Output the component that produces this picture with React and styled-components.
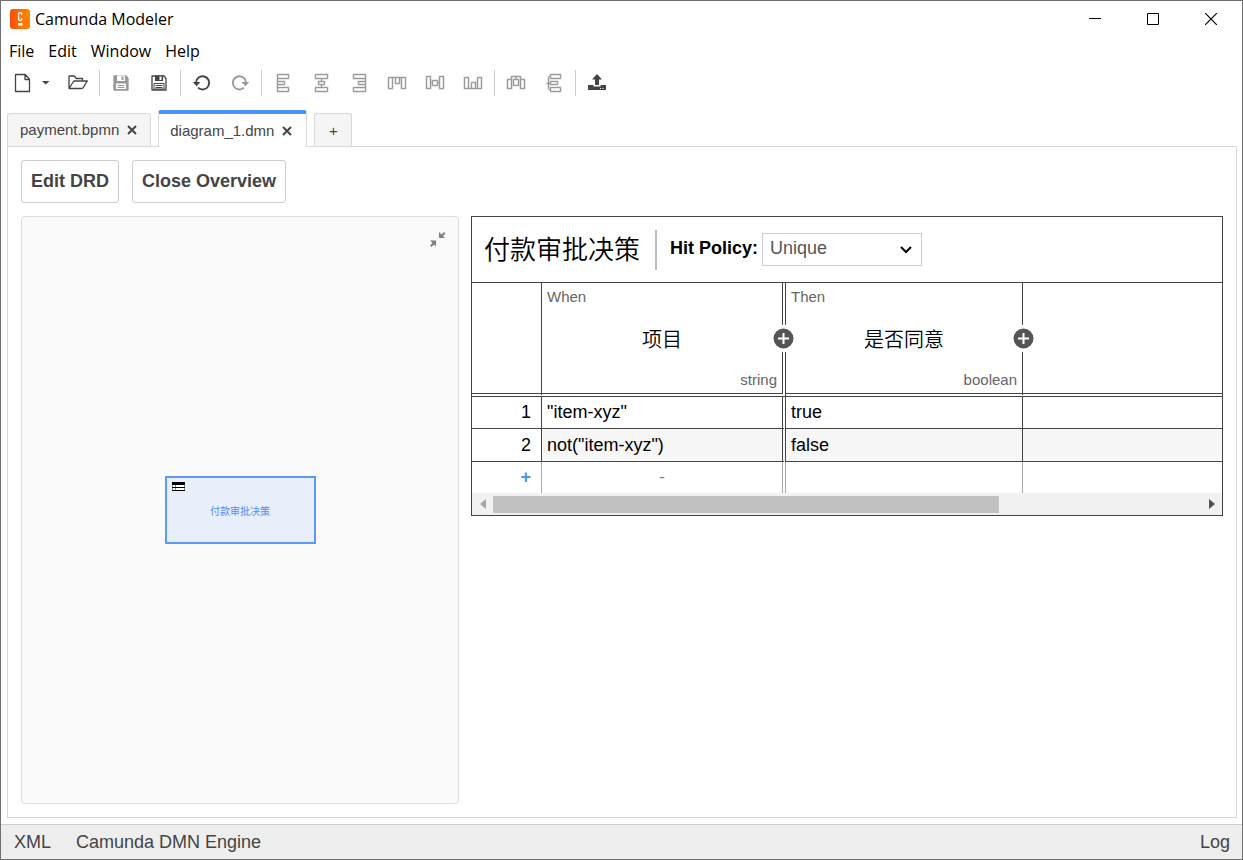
import React, { useState } from "react";
import styled, { createGlobalStyle } from "styled-components";

const GlobalStyle = createGlobalStyle`
  * {
    box-sizing: border-box;
  }

  body {
    margin: 0;
    background: #fff;
    color: #444;
    font-family: "Liberation Sans", "Noto Sans CJK SC", sans-serif;
    font-size: 18px;
  }

  button, select {
    font: inherit;
    color: inherit;
  }

  svg {
    display: block;
  }
`;

const Window = styled.div`
  display: flex;
  flex-direction: column;
  min-height: 100vh;
  border: 1px solid #707070;
`;

const TitleBar = styled.header`
  display: flex;
  align-items: center;
  height: 36px;
  padding: 0 2px 0 9px;
`;

const AppTitle = styled.h1`
  flex: 1;
  margin: 0 0 0 5px;
  color: #000;
  font-family: "Open Sans", sans-serif;
  font-size: 16px;
  font-weight: 400;
`;

const WindowButton = styled.button`
  display: flex;
  align-items: center;
  justify-content: center;
  width: 58px;
  height: 36px;
  padding: 0;
  border: 0;
  background: none;
  color: #000;
`;

const Menu = styled.nav`
  display: flex;
  gap: 14px;
  height: 26px;
  padding: 2px 0 0 8px;
`;

const MenuButton = styled.button`
  padding: 0;
  border: 0;
  background: none;
  color: #000;
  font-family: "Open Sans", sans-serif;
  font-size: 16px;
  line-height: 24px;
`;

const Toolbar = styled.div`
  display: flex;
  align-items: center;
  height: 40px;
  padding-left: 3px;
`;

const ToolButton = styled.button`
  display: flex;
  align-items: center;
  justify-content: ${(props) => (props.$caret ? "flex-start" : "center")};
  width: ${(props) => (props.$caret ? "17px" : "38px")};
  height: 30px;
  padding: 0;
  border: 0;
  background: none;
  color: ${(props) => (props.disabled ? "#999" : "#444")};
`;

const Separator = styled.span`
  width: 1px;
  height: 26px;
  margin: 0 2px;
  background: #ccc;
`;

const Tabs = styled.div`
  display: flex;
  align-items: flex-end;
  gap: 7px;
  height: 43px;
  padding-left: 6px;
`;

const Tab = styled.div`
  display: flex;
  align-items: center;
  gap: 8px;
  position: relative;
  height: ${(props) => (props.$active ? "37px" : "33px")};
  margin-bottom: ${(props) => (props.$active ? "-1px" : "0")};
  padding: 0 13px 0 12px;
  border: 1px solid #d8d8d8;
  border-bottom: 0;
  border-radius: 3px 3px 0 0;
  background: ${(props) => (props.$active ? "#fff" : "#f5f5f5")};

  ${(props) =>
    props.$active &&
    `
    padding: 0 14px 0 11px;
    border-top: 4px solid #4d90ff;
  `}
`;

const TabButton = styled.button`
  padding: 0;
  border: 0;
  background: none;
  font-size: 15px;
  line-height: 32px;
`;

const NewTab = styled.button`
  width: 38px;
  height: 33px;
  padding: 0;
  border: 1px solid #d8d8d8;
  border-bottom: 0;
  border-radius: 3px 3px 0 0;
  background: #f5f5f5;
  font-size: 15px;
`;

const Content = styled.main`
  display: flex;
  flex-direction: column;
  flex: 1;
  gap: 13px;
  margin: 0 5px 6px 6px;
  padding: 13px;
  border: 1px solid #d8d8d8;
`;

const Actions = styled.div`
  display: flex;
  gap: 13px;
`;

const ActionButton = styled.button`
  height: 43px;
  padding: 0 9px;
  border: 1px solid #ccc;
  border-radius: 3px;
  background: #fff;
  font-weight: 700;
`;

const Panels = styled.div`
  display: grid;
  grid-template-columns: 438px minmax(0, 1fr);
  gap: 12px;
  flex: 1;
`;

const Overview = styled.section`
  display: flex;
  align-items: center;
  justify-content: center;
  position: relative;
  border: 1px solid #dcdcdc;
  border-radius: 4px;
  background: #fafafa;
`;

const CollapseButton = styled.button`
  position: absolute;
  top: 13px;
  right: 12px;
  padding: 0;
  border: 0;
  background: none;
  color: #808080;
`;

const Decision = styled.div`
  display: flex;
  align-items: center;
  justify-content: center;
  position: relative;
  width: 151px;
  height: 68px;
  border: 2px solid #5c99fd;
  background: #e8eefa;
  color: #4d90ff;
  font-size: 10px;
`;

const DecisionIcon = styled.svg`
  position: absolute;
  top: 4px;
  left: 5px;
`;

const Editor = styled.section`
  align-self: start;
  border: 1px solid #444;
  background: #fff;
  color: #000;
`;

const Properties = styled.div`
  display: flex;
  align-items: center;
  height: 66px;
  padding-left: 12px;
  border-bottom: 1px solid #444;
`;

const DecisionName = styled.h2`
  margin: 0;
  padding-right: 15px;
  border-right: 2px solid #bbb;
  font-size: 26px;
  font-weight: 350;
  line-height: 40px;
`;

const PolicyLabel = styled.label`
  padding: 0 4px 3px 13px;
  font-weight: 700;
`;

const SelectBox = styled.div`
  position: relative;
  color: #000;

  svg {
    position: absolute;
    top: 12px;
    right: 10px;
    pointer-events: none;
  }
`;

const Select = styled.select`
  width: 160px;
  height: 33px;
  padding: 0 8px 3px 7px;
  border: 1px solid #ccc;
  border-radius: 0;
  background: #fff;
  color: #555;
  appearance: none;
`;

const Table = styled.table`
  width: 100%;
  border-spacing: 0;
  table-layout: fixed;

  col.index {
    width: 70px;
  }

  col.input {
    width: 244px;
  }

  col.output {
    width: 237px;
  }
`;

const HeadCell = styled.th`
  position: relative;
  height: 114px;
  padding: 4px 5px 3px;
  border-right: ${(props) => props.$line || "1px solid"} #444;
  border-bottom: 4px double #444;
  font-weight: 400;
`;

const Clause = styled.div`
  display: flex;
  flex-direction: column;
  justify-content: space-between;
  height: 103px;
  line-height: 20px;
  text-align: left;
`;

const Small = styled.span`
  align-self: ${(props) => (props.$end ? "flex-end" : "flex-start")};
  color: #666;
  font-size: 15px;
`;

const ClauseName = styled.span`
  align-self: center;
  padding-top: 2px;
  font-size: 20px;
  font-weight: 350;
`;

const AddClause = styled.button`
  position: absolute;
  z-index: 1;
  top: 42px;
  right: -15px;
  padding: 3px;
  border: 0;
  background: #fff;
`;

const Cell = styled.td`
  height: ${(props) => (props.$tall ? "33px" : "32px")};
  padding: 0 5px 1px;
  border-right: ${(props) => props.$line || "1px solid"} #444;
  border-bottom: 1px solid #444;
  background: ${(props) => (props.$shade ? "#f7f7f7" : "#fff")};
  line-height: 20px;

  &:last-child {
    border-right: 0;
  }
`;

const IndexCell = styled(Cell)`
  padding-right: 10px;
  text-align: right;
`;

const FootCell = styled(Cell)`
  height: 31px;
  border-color: #aaa;
  border-bottom: 0;
  color: #888;
  text-align: center;
`;

const AddRow = styled.button`
  display: block;
  margin-left: auto;
  padding: 0 5px 0 0;
  border: 0;
  background: none;
  color: #4d90ff;
  font-weight: 700;
  line-height: 20px;
`;

const Scroller = styled.div`
  display: flex;
  align-items: center;
  height: 22px;
  background: #f1f1f1;
`;

const ScrollButton = styled.button`
  display: flex;
  align-items: center;
  justify-content: center;
  width: 21px;
  height: 21px;
  padding: 0;
  border: 0;
  background: none;
  color: ${(props) => (props.disabled ? "#a3a3a3" : "#505050")};
`;

const Track = styled.div`
  flex: 1;
`;

const Thumb = styled.div`
  height: 17px;
  background: #c1c1c1;
`;

const StatusBar = styled.footer`
  display: flex;
  gap: 25px;
  height: 35px;
  padding: 0 12px 0 13px;
  border-top: 1px solid #ccc;
  background: #eee;
`;

const StatusButton = styled.button`
  padding: 0;
  border: 0;
  background: none;
  line-height: 34px;

  &:last-child {
    margin-left: auto;
  }
`;

const Icon = ({ w = 20, h = 20, children, ...rest }) => (
  <svg
    width={w}
    height={h}
    viewBox={`0 0 ${w} ${h}`}
    fill="none"
    stroke="currentColor"
    aria-hidden="true"
    {...rest}
  >
    {children}
  </svg>
);

const Logo = () => (
  <svg width="20" height="20" viewBox="0 0 20 20" aria-hidden="true">
    <defs>
      <linearGradient id="logo" x1="0" y1="0" x2="1" y2="0">
        <stop offset="0" stopColor="#fc4c08" />
        <stop offset="1" stopColor="#ff8c00" />
      </linearGradient>
    </defs>
    <rect width="20" height="20" rx="3" fill="url(#logo)" />
    <path d="M12 3l8 7v7a3 3 0 0 1-3 3h-5l-4-4z" fill="#ff7a00" opacity=".6" />
    <path
      d="M11.8 6V5q0-1.300-1.300-1.300h-.6Q8.600 3.700 8.600 5v5q0 1.300 1.300 1.300h.6q1.300 0 1.300-1.300v-1"
      fill="none"
      stroke="#fff"
      strokeWidth="1.300"
    />
    <path d="M8 14h4.500v2.500H8z" fill="#fff" />
  </svg>
);

const FileIcon = () => (
  <Icon strokeWidth="1.300">
    <path d="M2.500 1.500h9.700l4.300 4.800v12.200h-14zM12 1.500v5h4.500" strokeLinejoin="round" />
  </Icon>
);

const CaretIcon = () => (
  <Icon w={8} h={4} fill="currentColor" stroke="none">
    <path d="M0 0h7.500L3.700 3.500z" />
  </Icon>
);

const FolderIcon = () => (
  <Icon w={22} strokeWidth="1.300" strokeLinejoin="round">
    <path d="M2 15.500v-12q0-.5.500-.5h4.800l2 2.500h6.200v2.500M2 15.500l4.800-7.500h13.500L16 14.800q-.4.700-1.200.7z" />
  </Icon>
);

const SaveIcon = ({ filled }) => (
  <Icon>
    <path
      d="M3 3h12l2 2.500V17H3z"
      fill={filled ? "currentColor" : "none"}
      strokeWidth="1.300"
      strokeLinejoin="round"
    />
    <path d="M6 2.500h8V8H6z" fill={filled ? "#fff" : "currentColor"} stroke="none" />
    <path
      d="M10.500 3.500h2v3.500h-2z"
      fill={filled ? "currentColor" : "#fff"}
      stroke="none"
    />
    <path
      d="M5 10.500h10V16H5z"
      fill={filled ? "#fff" : "none"}
      stroke={filled ? "none" : "currentColor"}
    />
    <path d="M6.500 12.500h7M6.500 14.500h7" />
  </Icon>
);

const UndoIcon = () => (
  <Icon>
    <path d="M4 9.800A6.600 6.600 0 1 1 6 14.600" strokeWidth="1.900" />
    <path d="M.8 9h7.600l-3.800 4.200z" fill="currentColor" stroke="none" />
  </Icon>
);

const RedoIcon = () => (
  <Icon>
    <path d="M16 9.800A6.600 6.600 0 1 0 14 14.600" strokeWidth="1.900" />
    <path d="M11.600 9h7.600l-3.800 4.200z" fill="currentColor" stroke="none" />
  </Icon>
);

// Outlines of the align / distribute glyphs
const ALIGN_PATHS = {
  left: "M4.500 1.500h11v4h-11zM4.500 8.500h7v3h-7zM4.500 14.500h11v4h-11zM4.500 5v10",
  center:
    "M4.500 1.500h12v4h-12zM7.500 8.500h6v3h-6zM4.500 14.500h12v4h-12zM10.500 5.500v3M10.500 11.500v3",
  right: "M4.500 1.500h12v4h-12zM9.500 8.500h7v3h-7zM4.500 14.500h12v4h-12zM16.500 5v10",
  top: "M1.500 4.500h4v11h-4zM8.500 4.500h4v6h-4zM14.500 4.500h4v11h-4zM5 4.500h10",
  middle:
    "M1.500 3.500h4v12h-4zM7.500 7.500h5v5h-5zM14.500 3.500h4v12h-4zM5.500 9.500h2M12.500 9.500h2",
  bottom: "M1.500 4.500h4v11h-4zM8.500 9.500h4v6h-4zM14.500 4.500h4v11h-4zM5 15.500h10",
  horizontal:
    "M1.500 6.500h4v9h-4zM7.500 6.500h5v6h-5zM14.500 6.500h4v9h-4zM3.500 6.500h2v-3h9v3h2M10 3.500v3",
  vertical:
    "M6.500 1.500h10v4h-10zM6.500 8.500h7v3h-7zM6.500 14.500h10v4h-10zM6.500 3.500h-1l-1 1v11l1 1h1M2.500 10.500h4",
};

const AlignIcon = ({ kind }) => (
  <Icon>
    <path d={ALIGN_PATHS[kind]} strokeWidth="2" opacity=".45" />
    <path d={ALIGN_PATHS[kind]} />
  </Icon>
);

const DeployIcon = () => (
  <Icon fill="currentColor" stroke="none">
    <path d="M10 1l5 5.500h-3V12H8V6.500H5z" />
    <path d="M1 12h5.500v1.500h7V12H19v5H1z" />
    <path d="M13 15.500h1M15.500 15.500h1" stroke="#fff" />
  </Icon>
);

const CloseIcon = () => (
  <Icon w={10} h={10} strokeWidth="2">
    <path d="M1 1l8 8M9 1L1 9" />
  </Icon>
);

const PlusCircle = () => (
  <Icon w={21} h={21} stroke="none">
    <circle cx="10.500" cy="10.500" r="10" fill="#555" />
    <path d="M10.500 5v11M5 10.500h11" stroke="#fff" strokeWidth="2" />
  </Icon>
);

const ALIGN_TOOLS = ["left", "center", "right", "top", "middle", "bottom"];
const DISTRIBUTE_TOOLS = ["horizontal", "vertical"];

const RULES = [
  { input: '"item-xyz"', output: "true" },
  { input: 'not("item-xyz")', output: "false" },
];

const DecisionTable = () => {
  const [policy, setPolicy] = useState("Unique");

  return (
    <Editor>
      <Properties>
        <DecisionName>付款审批决策</DecisionName>
        <PolicyLabel htmlFor="hit-policy">Hit Policy:</PolicyLabel>
        <SelectBox>
          <Select
            id="hit-policy"
            value={policy}
            onChange={(event) => setPolicy(event.target.value)}
          >
            <option>Unique</option>
            <option>First</option>
            <option>Collect</option>
          </Select>
          <Icon w={12} h={9} strokeWidth="2">
            <path d="M1 2l5 5 5-5" />
          </Icon>
        </SelectBox>
      </Properties>
      <Table>
        <colgroup>
          <col className="index" />
          <col className="input" />
          <col className="output" />
          <col />
        </colgroup>
        <thead>
          <tr>
            <HeadCell />
            <HeadCell $line="4px double">
              <Clause>
                <Small>When</Small>
                <ClauseName>项目</ClauseName>
                <Small $end>string</Small>
              </Clause>
              <AddClause aria-label="Add input">
                <PlusCircle />
              </AddClause>
            </HeadCell>
            <HeadCell>
              <Clause>
                <Small>Then</Small>
                <ClauseName>是否同意</ClauseName>
                <Small $end>boolean</Small>
              </Clause>
              <AddClause aria-label="Add output">
                <PlusCircle />
              </AddClause>
            </HeadCell>
            <HeadCell $line="0 solid" />
          </tr>
        </thead>
        <tbody>
          {RULES.map((rule, index) => (
            <tr key={rule.input}>
              <IndexCell $tall={index % 2 === 1}>{index + 1}</IndexCell>
              <Cell $line="4px double" $shade={index % 2 === 1}>
                {rule.input}
              </Cell>
              <Cell $shade={index % 2 === 1}>{rule.output}</Cell>
              <Cell $shade={index % 2 === 1} />
            </tr>
          ))}
        </tbody>
        <tfoot>
          <tr>
            <FootCell>
              <AddRow aria-label="Add rule">+</AddRow>
            </FootCell>
            <FootCell $line="4px double">-</FootCell>
            <FootCell />
            <FootCell />
          </tr>
        </tfoot>
      </Table>
      <Scroller>
        <ScrollButton disabled aria-label="Scroll left">
          <Icon w={6} h={10} fill="currentColor" stroke="none">
            <path d="M6 0v10L0 5z" />
          </Icon>
        </ScrollButton>
        <Track>
          <Thumb style={{ width: `${(750 / 1050) * 100}%` }} />
        </Track>
        <ScrollButton aria-label="Scroll right">
          <Icon w={6} h={10} fill="currentColor" stroke="none">
            <path d="M0 0v10l6-5z" />
          </Icon>
        </ScrollButton>
      </Scroller>
    </Editor>
  );
};

const App = () => (
  <>
    <GlobalStyle />
    <Window>
      <TitleBar>
        <Logo />
        <AppTitle>Camunda Modeler</AppTitle>
        <WindowButton aria-label="Minimize">
          <Icon w={12} h={12}>
            <path d="M0 5.500h12" />
          </Icon>
        </WindowButton>
        <WindowButton aria-label="Maximize">
          <Icon w={12} h={12}>
            <path d="M.5.5h11v11H.5z" />
          </Icon>
        </WindowButton>
        <WindowButton aria-label="Close">
          <Icon w={12} h={12} strokeWidth="1.200">
            <path d="M0 0l12 12M12 0L0 12" />
          </Icon>
        </WindowButton>
      </TitleBar>
      <Menu>
        <MenuButton>File</MenuButton>
        <MenuButton>Edit</MenuButton>
        <MenuButton>Window</MenuButton>
        <MenuButton>Help</MenuButton>
      </Menu>
      <Toolbar>
        <ToolButton aria-label="New file">
          <FileIcon />
        </ToolButton>
        <ToolButton $caret aria-label="New file options">
          <CaretIcon />
        </ToolButton>
        <ToolButton aria-label="Open">
          <FolderIcon />
        </ToolButton>
        <Separator />
        <ToolButton disabled aria-label="Save">
          <SaveIcon filled />
        </ToolButton>
        <ToolButton aria-label="Save as">
          <SaveIcon />
        </ToolButton>
        <Separator />
        <ToolButton aria-label="Undo">
          <UndoIcon />
        </ToolButton>
        <ToolButton disabled aria-label="Redo">
          <RedoIcon />
        </ToolButton>
        <Separator />
        {ALIGN_TOOLS.map((kind) => (
          <ToolButton key={kind} disabled aria-label={`Align ${kind}`}>
            <AlignIcon kind={kind} />
          </ToolButton>
        ))}
        <Separator />
        {DISTRIBUTE_TOOLS.map((kind) => (
          <ToolButton key={kind} disabled aria-label={`Distribute ${kind}`}>
            <AlignIcon kind={kind} />
          </ToolButton>
        ))}
        <Separator />
        <ToolButton aria-label="Deploy">
          <DeployIcon />
        </ToolButton>
      </Toolbar>
      <Tabs>
        <Tab>
          <TabButton>payment.bpmn</TabButton>
          <TabButton aria-label="Close payment.bpmn">
            <CloseIcon />
          </TabButton>
        </Tab>
        <Tab $active>
          <TabButton>diagram_1.dmn</TabButton>
          <TabButton aria-label="Close diagram_1.dmn">
            <CloseIcon />
          </TabButton>
        </Tab>
        <NewTab aria-label="New tab">+</NewTab>
      </Tabs>
      <Content>
        <Actions>
          <ActionButton>Edit DRD</ActionButton>
          <ActionButton>Close Overview</ActionButton>
        </Actions>
        <Panels>
          <Overview>
            <CollapseButton aria-label="Collapse overview">
              <Icon w={18} h={18} fill="currentColor" stroke="none">
                <path d="M11 2v6h6l-2-2 2.500-2.500-1.500-1.500L13.500 4.500zM2 10.500h6v6l-2-2L3.500 17 2 15.500 4.500 13z" />
              </Icon>
            </CollapseButton>
            <Decision>
              <DecisionIcon width="13" height="9" viewBox="0 0 13 9">
                <path d="M0 0h13v9H0z" fill="#fff" />
                <path d="M.5 3v5M3.500 3v5M12.500 3v5" stroke="#888" />
                <path d="M0 0h13v3H0zM0 5h13v1H0zM0 8h13v1H0z" />
              </DecisionIcon>
              付款审批决策
            </Decision>
          </Overview>
          <DecisionTable />
        </Panels>
      </Content>
      <StatusBar>
        <StatusButton>XML</StatusButton>
        <StatusButton>Camunda DMN Engine</StatusButton>
        <StatusButton>Log</StatusButton>
      </StatusBar>
    </Window>
  </>
);

export default App;
